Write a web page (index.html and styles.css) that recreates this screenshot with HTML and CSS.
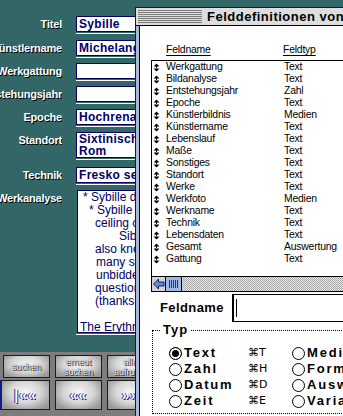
FILE: index.html
```html
<!DOCTYPE html>
<html lang="de">
<head>
<meta charset="utf-8">
<title>Felddefinitionen</title>
<link rel="stylesheet" href="styles.css">
</head>
<body>
<svg class="defs" width="0" height="0" aria-hidden="true">
  <symbol id="updown" viewBox="0 0 7 9">
    <path d="M0.5 3.5 L3.5 0.5 L6.5 3.5 Z M3 3 H4 V6 H3 Z M0.5 5.5 L3.5 8.5 L6.5 5.5 Z" fill="#000"/>
  </symbol>
</svg>
<div class="screen">
  <div class="layout">
    <div class="form">
      <div class="row first">
        <div class="lbl"><span>Titel</span></div>
        <div class="fld"><div class="box">Sybille</div></div>
      </div>
      <div class="row">
        <div class="lbl"><span>Künstlername</span></div>
        <div class="fld"><div class="box">Michelangelo Buonarroti</div></div>
      </div>
      <div class="row">
        <div class="lbl"><span>Werkgattung</span></div>
        <div class="fld"><div class="box"></div></div>
      </div>
      <div class="row">
        <div class="lbl"><span>Entstehungsjahr</span></div>
        <div class="fld"><div class="box"></div></div>
      </div>
      <div class="row">
        <div class="lbl"><span>Epoche</span></div>
        <div class="fld"><div class="box">Hochrenaissance</div></div>
      </div>
      <div class="row tall">
        <div class="lbl"><span>Standort</span></div>
        <div class="fld"><div class="box two">Sixtinische Kapelle<br>Rom</div></div>
      </div>
      <div class="row">
        <div class="lbl"><span>Technik</span></div>
        <div class="fld"><div class="box">Fresko secco</div></div>
      </div>
      <div class="row">
        <div class="lbl"><span>Werkanalyse</span></div>
        <div class="fld memo-fld">
          <div class="box memo">
            <div class="ind3">* Sybille delphica *</div>
            <div class="ind9">* Sybille erythraea *</div>
            <div class="ind15">ceiling of the Sistine Chapel</div>
            <div class="ind39">Sibylla</div>
            <div class="ind15">also known as prophetesses</div>
            <div class="ind16">many sibyls were known</div>
            <div class="ind16">unbidden they answered</div>
            <div class="ind15">questions about the future</div>
            <div class="ind15">(thanks to Apollo)</div>
            <div class="blank">&nbsp;</div>
            <div>The Erythraean Sibyl</div>
          </div>
        </div>
      </div>
    </div>
    <div class="btnbar">
      <div class="btnrow r1">
        <div class="btn">suchen</div>
        <div class="btn">erneut<br>suchen</div>
        <div class="btn">alle<br>aufrufen</div>
      </div>
      <div class="btnrow r2">
        <div class="btn nav firstnav">|««</div>
        <div class="btn nav">««</div>
        <div class="btn nav">»»</div>
      </div>
    </div>
  </div>

  <div class="window">
    <div class="titlebar">
      <div class="stripes"></div>
      <div class="title">Felddefinitionen von Sybille</div>
    </div>
    <div class="wbody">
      <div class="lhead">
        <span>Feldname</span>
        <span>Feldtyp</span>
      </div>
      <div class="list">
        <div class="rows">
          <div class="lrow"><svg class="drag"><use href="#updown"/></svg><span>Werkgattung</span><span>Text</span></div>
          <div class="lrow"><svg class="drag"><use href="#updown"/></svg><span>Bildanalyse</span><span>Text</span></div>
          <div class="lrow"><svg class="drag"><use href="#updown"/></svg><span>Entstehungsjahr</span><span>Zahl</span></div>
          <div class="lrow"><svg class="drag"><use href="#updown"/></svg><span>Epoche</span><span>Text</span></div>
          <div class="lrow"><svg class="drag"><use href="#updown"/></svg><span>Künstlerbildnis</span><span>Medien</span></div>
          <div class="lrow"><svg class="drag"><use href="#updown"/></svg><span>Künstlername</span><span>Text</span></div>
          <div class="lrow"><svg class="drag"><use href="#updown"/></svg><span>Lebenslauf</span><span>Text</span></div>
          <div class="lrow"><svg class="drag"><use href="#updown"/></svg><span>Maße</span><span>Text</span></div>
          <div class="lrow"><svg class="drag"><use href="#updown"/></svg><span>Sonstiges</span><span>Text</span></div>
          <div class="lrow"><svg class="drag"><use href="#updown"/></svg><span>Standort</span><span>Text</span></div>
          <div class="lrow"><svg class="drag"><use href="#updown"/></svg><span>Werke</span><span>Text</span></div>
          <div class="lrow"><svg class="drag"><use href="#updown"/></svg><span>Werkfoto</span><span>Medien</span></div>
          <div class="lrow"><svg class="drag"><use href="#updown"/></svg><span>Werkname</span><span>Text</span></div>
          <div class="lrow"><svg class="drag"><use href="#updown"/></svg><span>Technik</span><span>Text</span></div>
          <div class="lrow"><svg class="drag"><use href="#updown"/></svg><span>Lebensdaten</span><span>Text</span></div>
          <div class="lrow"><svg class="drag"><use href="#updown"/></svg><span>Gesamt</span><span>Auswertung</span></div>
          <div class="lrow"><svg class="drag"><use href="#updown"/></svg><span>Gattung</span><span>Text</span></div>
        </div>
        <div class="hscroll">
          <div class="arrow">
            <svg width="12" height="12" viewBox="0 0 12 12"><path d="M0.5 6 L5.5 1 V4 H11 V8 H5.5 V11 Z" fill="#5b8fe0" stroke="#10206a" stroke-width="1" stroke-linejoin="miter"/></svg>
          </div>
          <div class="thumb"><div class="grip"></div></div>
          <div class="track"></div>
        </div>
      </div>
      <div class="fname">
        <span class="fname-lbl">Feldname</span>
        <div class="fname-box"><div class="cursor"></div></div>
      </div>
      <fieldset class="typ">
        <legend>Typ</legend>
        <div class="radios">
          <div class="rb on">Text</div><div class="key">⌘T</div><div class="rb">Medien</div>
          <div class="rb">Zahl</div><div class="key">⌘H</div><div class="rb">Formel</div>
          <div class="rb">Datum</div><div class="key">⌘D</div><div class="rb">Auswertung</div>
          <div class="rb">Zeit</div><div class="key">⌘E</div><div class="rb">Variable</div>
        </div>
      </fieldset>
    </div>
  </div>
</div>
</body>
</html>
```
FILE: styles.css
```css
* { box-sizing: border-box; margin: 0; padding: 0; }
html, body { width: 343px; height: 416px; overflow: hidden; }
body { background: #336666; font-family: "Liberation Sans", Arial, sans-serif; }
.defs { position: absolute; }

.screen { position: relative; width: 343px; height: 416px; overflow: hidden; }

/* ---------- left form ---------- */
.form { height: 352px; background: #336666; padding-top: 16px; }
.row { display: grid; grid-template-columns: 62px 60px; column-gap: 14px; margin-bottom: 5px; }
.row.first { margin-bottom: 6px; }
.row.tall { margin-bottom: 7px; }
.lbl {
  display: flex; justify-content: flex-end; overflow: hidden; white-space: nowrap;
  font: bold 11px/16px "Liberation Sans", Arial, sans-serif; letter-spacing: -0.2px;
  color: #fff; text-shadow: 1px 1px 0 #000;
}
.lbl span { flex-shrink: 0; }
.fld { border-bottom: 1px solid #fff; padding-bottom: 1px; overflow: hidden; }
.box {
  height: 16px; border: 1px solid #000066; background: #fff; color: #000066;
  font: bold 12px/14px "Liberation Sans", Arial, sans-serif; letter-spacing: 0.3px;
  padding: 0 2px; white-space: nowrap; overflow: hidden;
}
.box.two { height: 26px; line-height: 12px; }
.box.memo {
  height: 143px; font-weight: normal; line-height: 13px; letter-spacing: 0;
  padding: 0 0 0 2px; margin-left: 1px;
}
.ind3 { padding-left: 3px; }
.ind9 { padding-left: 9px; }
.ind15 { padding-left: 15px; }
.ind16 { padding-left: 16px; }
.ind39 { padding-left: 39px; }

/* ---------- buttons ---------- */
.btnbar {
  height: 64px; background: #7d7d7d; padding-top: 3px;
  display: flex; flex-direction: column; gap: 2px;
}
.btnrow { display: flex; gap: 5px; padding-left: 3px; }
.btn {
  width: 47px; border: 1px solid #1c1c1c;
  background: radial-gradient(ellipse 60% 70% at 50% 40%, #f6f6f6 0%, #d6d6d6 55%, #9a9a9a 100%);
  display: flex; align-items: center; justify-content: center; text-align: center;
  flex-shrink: 0;
}
.r1 .btn {
  height: 23px; font: 9px/10px "Liberation Sans", Arial, sans-serif;
  color: #fafafa; text-shadow: 0 0 1px #000, 1px 1px 0 #333;
}
.r2 { padding-left: 0; }
.r2 .btn {
  height: 30px; font: bold 14px/16px "Liberation Sans", Arial, sans-serif;
  color: #fff; text-shadow: 1px 1px 0 #1a2a9a, -1px 0 0 #1a2a9a; letter-spacing: 1px;
}
.r2 .firstnav { width: 50px; border-left: 2px solid #101e7c; }

/* ---------- window ---------- */
.window {
  position: absolute; left: 135px; top: 7px; width: 240px; height: 420px;
  border-left: 1px solid #1a1a1a; border-top: 1px solid #1a1a1a;
  background: #a8b8d8;
}
.titlebar {
  height: 18px; background: #dddddd; border-bottom: 1px solid #000;
  display: flex; align-items: center; padding-left: 2px;
}
.stripes {
  width: 64px; height: 13px; flex-shrink: 0;
  background: repeating-linear-gradient(to bottom, #7c7c7c 0 1px, #dddddd 1px 2px);
}
.title {
  margin-left: 5px; white-space: nowrap; color: #000;
  font: bold 13px/16px "Liberation Sans", Arial, sans-serif; letter-spacing: 0.5px;
}
.wbody {
  margin-left: 3px; border-left: 1px solid #000; background: #fff;
  height: 402px; padding-top: 16px;
}
.lhead {
  display: grid; grid-template-columns: 117px auto; padding-left: 26px;
  height: 16px; font: 10.4px/16px "Liberation Sans", Arial, sans-serif; letter-spacing: -0.2px; color: #000;
}
.lhead span { text-decoration: underline; text-underline-offset: 2px; }
.list { margin: 2px 0 0 11px; border-left: 1px solid #000; border-top: 1px solid #000; }
.rows { height: 215px; }
.lrow {
  display: grid; grid-template-columns: 13px 118px auto; align-items: center;
  height: 12px; padding-left: 1px;
  font: 10.4px/12px "Liberation Sans", Arial, sans-serif; letter-spacing: -0.2px;
  color: #000; white-space: nowrap;
}
.drag { width: 7px; height: 9px; }
.hscroll {
  height: 16px; border-top: 1px solid #000; border-bottom: 1px solid #000;
  display: flex;
}
.arrow {
  width: 14px; border-right: 1px solid #000; background: #d4d4d4;
  display: flex; align-items: center; justify-content: center;
}
.thumb {
  width: 16px; border-right: 1px solid #000; background: #9db6e6;
  display: flex; align-items: center; justify-content: center;
}
.grip {
  width: 9px; height: 8px;
  background: repeating-linear-gradient(to right, #22338a 0 1px, transparent 1px 2px);
}
.track {
  flex: 1;
  background: repeating-conic-gradient(#a9a9a9 0 25%, #e6e6e6 0 50%) 0 0 / 2px 2px;
}
.fname { display: flex; align-items: center; margin-top: 2px; height: 28px; padding-left: 20px; }
.fname-lbl {
  width: 72px; flex-shrink: 0;
  font: bold 13px/16px "Liberation Sans", Arial, sans-serif; letter-spacing: 0.4px; color: #000;
}
.fname-box {
  flex: 1; height: 28px; border: 1px solid #000; border-left-width: 2px;
  display: flex; align-items: center; padding-left: 2px;
}
.cursor { width: 1px; height: 18px; background: #000; }

.typ {
  margin: 0 0 0 12px; border: 1px dotted #000; padding: 7px 0 4px 8px; width: 260px;
}
.typ legend {
  padding: 0 2px; font: bold 13px/16px "Liberation Sans", Arial, sans-serif; letter-spacing: 1px; color: #000;
}
.radios {
  display: grid; grid-template-columns: 79px 44px auto; grid-auto-rows: 16px;
  margin-left: 8px; align-items: center;
}
.rb {
  display: flex; align-items: center; gap: 2px; white-space: nowrap;
  font: bold 13px/16px "Liberation Sans", Arial, sans-serif; letter-spacing: 1.8px; color: #000;
}
.rb::before {
  content: ""; width: 11px; height: 11px; flex-shrink: 0;
  border: 1px solid #000; border-radius: 50%; background: #fff;
}
.rb.on::before { background: #000; box-shadow: inset 0 0 0 2px #fff; }
.key { font: 11px/16px "DejaVu Sans", sans-serif; color: #000; }
```
